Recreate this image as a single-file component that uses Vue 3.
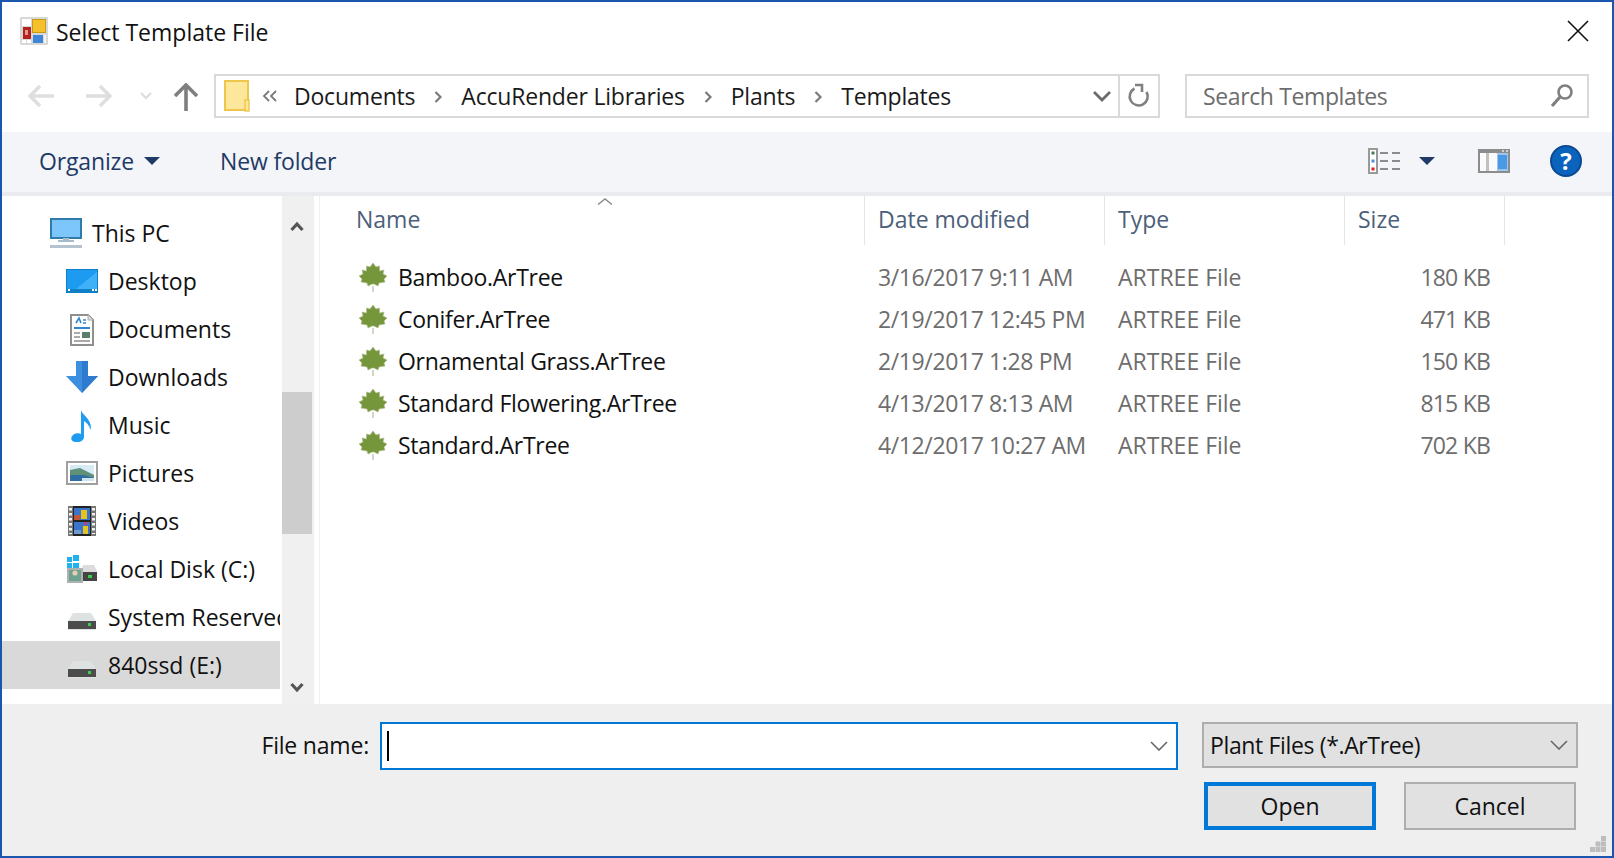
<script setup>
const crumbs = ['Documents', 'AccuRender Libraries', 'Plants', 'Templates']
const navItems = [
  { label: 'This PC', icon: 'pc', root: true },
  { label: 'Desktop', icon: 'desktop' },
  { label: 'Documents', icon: 'documents' },
  { label: 'Downloads', icon: 'downloads' },
  { label: 'Music', icon: 'music' },
  { label: 'Pictures', icon: 'pictures' },
  { label: 'Videos', icon: 'videos' },
  { label: 'Local Disk (C:)', icon: 'local' },
  { label: 'System Reserved', icon: 'drive' },
  { label: '840ssd (E:)', icon: 'drive', selected: true }
]
const files = [
  { name: 'Bamboo.ArTree', date: '3/16/2017 9:11 AM', size: '180 KB' },
  { name: 'Conifer.ArTree', date: '2/19/2017 12:45 PM', size: '471 KB' },
  { name: 'Ornamental Grass.ArTree', date: '2/19/2017 1:28 PM', size: '150 KB' },
  { name: 'Standard Flowering.ArTree', date: '4/13/2017 8:13 AM', size: '815 KB' },
  { name: 'Standard.ArTree', date: '4/12/2017 10:27 AM', size: '702 KB' }
]
</script>

<template>
  <div class="window">
    <header class="title">
      <svg class="app-icon" width="28" height="28" viewBox="0 0 28 28">
        <rect width="28" height="28" rx="1" fill="#d8d8d8" />
        <rect x="2" y="2" width="9" height="7" fill="#fff" />
        <rect x="12.500" y="2.500" width="13" height="13" fill="#f5c02c" stroke="#c99a18" />
        <rect x="3" y="10" width="8" height="12" fill="#b5211b" />
        <rect x="5" y="13" width="3" height="5" fill="#e09a92" />
        <rect x="13" y="18" width="10" height="8" fill="#3f86d8" />
        <rect x="2" y="23" width="4" height="3" fill="#fff" />
        <rect x="7" y="23" width="4" height="3" fill="#fff" />
        <rect x="24" y="18" width="2" height="8" fill="#f4f4f4" />
      </svg>
      <span class="title-text">Select Template File</span>
      <svg class="close" width="22" height="22" viewBox="0 0 22 22">
        <path d="M1 1 L21 21 M21 1 L1 21" stroke="#111" stroke-width="1.6" fill="none" />
      </svg>
    </header>

    <div class="nav">
      <div class="nav-buttons">
        <svg width="28" height="26" viewBox="0 0 28 26"><path d="M3 13 H27 M13 3 L3 13 L13 23" stroke="#dedede" stroke-width="3.4" fill="none" /></svg>
        <svg class="forward" width="28" height="26" viewBox="0 0 28 26"><path d="M1 13 H25 M15 3 L25 13 L15 23" stroke="#dedede" stroke-width="3.4" fill="none" /></svg>
        <svg class="recent" width="12" height="8" viewBox="0 0 12 8"><path d="M1 1 L6 6 L11 1" stroke="#dedede" stroke-width="2.4" fill="none" /></svg>
        <svg class="up" width="26" height="28" viewBox="0 0 26 28"><path d="M13 28 V3 M2 13 L13 2 L24 13" stroke="#7f7f7f" stroke-width="3.6" fill="none" /></svg>
      </div>
      <div class="address">
        <svg class="folder" width="26" height="32" viewBox="0 0 26 32">
          <rect x="1" y="1" width="23" height="29" fill="#fde79a" stroke="#eec64c" stroke-width="2" />
          <rect x="21" y="20" width="4" height="11" fill="#fde79a" stroke="#eec64c" stroke-width="1.4" />
        </svg>
        <svg class="more" width="16" height="12" viewBox="0 0 16 12"><path d="M7 1 L2 6 L7 11 M14 1 L9 6 L14 11" stroke="#7a7a7a" stroke-width="1.8" fill="none" /></svg>
        <template v-for="(crumb, i) in crumbs" :key="crumb">
          <span class="crumb">{{ crumb }}</span>
          <svg v-if="i < crumbs.length - 1" class="sep" width="8" height="12" viewBox="0 0 8 12"><path d="M1.5 1 L6.5 6 L1.5 11" stroke="#7a7a7a" stroke-width="2.2" fill="none" /></svg>
        </template>
        <svg class="drop" width="20" height="12" viewBox="0 0 20 12"><path d="M2 2 L10 10 L18 2" stroke="#6b6b6b" stroke-width="2.8" fill="none" /></svg>
        <div class="refresh">
          <svg width="24" height="26" viewBox="0 0 24 26"><path d="M19.500 9 A9 9 0 1 1 7.500 5.500 M8 2 H15 V9" stroke="#808080" stroke-width="2.6" fill="none" /></svg>
        </div>
      </div>
      <div class="search">
        <span class="search-text">Search Templates</span>
        <svg width="24" height="26" viewBox="0 0 24 26"><circle cx="15" cy="9" r="6.5" stroke="#7f7f7f" stroke-width="2.6" fill="none" /><path d="M10 14 L2 23" stroke="#7f7f7f" stroke-width="3.2" /></svg>
      </div>
    </div>

    <div class="toolbar">
      <span class="tool">Organize</span>
      <span class="caret"></span>
      <span class="tool new-folder">New folder</span>
      <div class="tool-right">
        <svg width="32" height="26" viewBox="0 0 32 26">
          <rect x="1" y="1" width="8" height="24" fill="#fff" stroke="#999" stroke-width="2" />
          <rect x="3.500" y="3.500" width="3" height="3" fill="#3f7f55" /><rect x="3.500" y="11.500" width="3" height="3" fill="#4a8fe8" /><rect x="3.500" y="19.500" width="3" height="3" fill="#e01f1f" />
          <path d="M12 5 H20 M24 5 H32 M12 13 H20 M24 13 H32 M12 21 H20 M24 21 H32" stroke="#8c8c8c" stroke-width="2" />
        </svg>
        <span class="caret view-caret"></span>
        <svg class="pane" width="32" height="24" viewBox="0 0 32 24">
          <rect width="32" height="24" fill="#8c8c8c" />
          <rect x="2" y="4" width="28" height="18" fill="#fafafa" />
          <rect x="8" y="4" width="3" height="18" fill="#c0c0c0" />
          <rect x="19" y="4" width="11" height="18" fill="#9cc6ec" />
          <rect x="20" y="6" width="9" height="14" fill="#4a99e4" />
          <rect x="24" y="1" width="2" height="2" fill="#cfcfcf" /><rect x="28" y="1" width="2" height="2" fill="#cfcfcf" />
        </svg>
        <div class="help">?</div>
      </div>
    </div>

    <main class="main">
      <aside class="sidebar">
        <div
          v-for="item in navItems"
          :key="item.label"
          class="nav-item"
          :class="{ root: item.root, selected: item.selected }"
        >
          <span class="nav-icon">
            <svg v-if="item.icon === 'pc'" width="32" height="30" viewBox="0 0 32 30">
              <rect x="1" y="1" width="30" height="19" fill="#7cc6fb" stroke="#2f7cab" stroke-width="2" />
              <rect x="13" y="20" width="6" height="3" fill="#a7bccb" /><rect x="8" y="22" width="16" height="2" fill="#a7bccb" /><rect y="27" width="32" height="3" fill="#b4c3cf" />
            </svg>
            <svg v-else-if="item.icon === 'desktop'" width="32" height="24" viewBox="0 0 32 24">
              <rect width="32" height="24" fill="#0f7fc8" /><rect x="1" y="1" width="30" height="19" fill="#1d9bf0" /><path d="M10 20 L31 3 V20 Z" fill="#3fb1f7" />
              <rect x="2" y="20" width="2" height="2" fill="#fff" /><rect x="26" y="20" width="2" height="2" fill="#fff" /><rect x="29" y="20" width="2" height="2" fill="#fff" />
            </svg>
            <svg v-else-if="item.icon === 'documents'" class="doc" width="24" height="32" viewBox="0 0 24 32">
              <path d="M1 1 H18 L23 6 V31 H1 Z" fill="#fff" stroke="#8f8f8f" stroke-width="2" />
              <path d="M18 1 V6 H23" fill="#ddd" stroke="#aaa" />
              <path d="M6 9 L9 4 L11 9 M13 6 H16 M13 9 H16" stroke="#2f86d0" stroke-width="1.6" fill="none" />
              <path d="M4 14 H20" stroke="#2f86d0" stroke-width="2" />
              <path d="M4 19 H10 M4 23 H10 M4 27 H20" stroke="#aaa" stroke-width="2" />
              <rect x="12" y="18" width="8" height="6" fill="#58806a" />
            </svg>
            <svg v-else-if="item.icon === 'downloads'" width="32" height="32" viewBox="0 0 32 32">
              <path d="M10 0 H22 V15 H32 L16 32 L0 15 H10 Z" fill="#3d8fe0" /><path d="M16 0 H22 V15 H32 L16 32 Z" fill="#2f7bd0" />
            </svg>
            <svg v-else-if="item.icon === 'music'" class="note" width="24" height="32" viewBox="0 0 24 32">
              <path d="M11 0 C12 5 22 9 21 20 C19 15 16 12 14 11 V27 C14 31 9 33 5 32 C1 31 0 28 3 25 C5 23 9 23 11 24 Z" fill="#1f9cf0" />
            </svg>
            <svg v-else-if="item.icon === 'pictures'" width="32" height="24" viewBox="0 0 32 24">
              <rect x="1" y="1" width="30" height="22" fill="#fff" stroke="#a0a0a0" stroke-width="2" />
              <rect x="4" y="4" width="24" height="16" fill="#d6ebf5" /><path d="M4 9 L14 7 L28 14 V17 H4 Z" fill="#5f9078" /><path d="M4 14 L18 14 L28 17 V20 H4 Z" fill="#2f6da5" /><path d="M16 17 H28 V20 H16 Z" fill="#cfe3ee" />
            </svg>
            <svg v-else-if="item.icon === 'videos'" class="film" width="28" height="30" viewBox="0 0 28 30">
              <rect width="28" height="30" fill="#777" />
              <path d="M2.500 2 V28 M25.500 2 V28" stroke="#f0f0f0" stroke-width="3" stroke-dasharray="2.500 2.500" />
              <rect x="5" y="0" width="18" height="30" fill="#222" />
              <rect x="6" y="2" width="16" height="12" fill="#3b74c8" /><rect x="6" y="16" width="16" height="12" fill="#3b74c8" />
              <rect x="6" y="9" width="6" height="5" fill="#c2573f" /><rect x="13" y="4" width="6" height="9" fill="#e6c21f" /><rect x="6" y="24" width="7" height="4" fill="#6a9ad0" /><rect x="15" y="20" width="5" height="8" fill="#e6c21f" /><rect x="16" y="16" width="3" height="3" fill="#c2407f" />
            </svg>
            <svg v-else-if="item.icon === 'local'" width="30" height="28" viewBox="0 0 30 28">
              <rect width="5" height="5" x="0" y="2" fill="#20b2ef" /><rect width="6" height="6" x="6" y="0" fill="#20b2ef" /><rect width="5" height="5" x="0" y="8" fill="#20b2ef" /><rect width="6" height="5" x="6" y="8" fill="#20b2ef" />
              <path d="M16 10 H27 L30 16 V26 H14 V16 Z" fill="#dcdcdc" /><rect x="14" y="17" width="16" height="9" fill="#444" /><rect x="21" y="20" width="4" height="3" fill="#37d04a" />
              <rect y="13" width="16" height="15" fill="#b0b0b0" /><rect x="2" y="15" width="12" height="11" fill="#6da28e" /><circle cx="8" cy="18" r="2.6" fill="#e9cdb3" />
            </svg>
            <svg v-else class="disk" width="28" height="17" viewBox="0 0 28 17">
              <path d="M5 0 H23 L28 8 V17 H0 V8 Z" fill="#dfe2e2" /><rect y="8" width="28" height="8" fill="#4c4c4c" /><rect x="20" y="10" width="3" height="3" fill="#37d04a" />
            </svg>
          </span>
          <span class="nav-label">{{ item.label }}</span>
        </div>
      </aside>

      <div class="scrollbar">
        <div class="scroll-top">
          <svg width="14" height="11" viewBox="0 0 14 11"><path d="M1.5 9 L7 3 L12.5 9" stroke="#555" stroke-width="3.2" fill="none" /></svg>
        </div>
        <div class="thumb"></div>
        <div class="scroll-bottom">
          <svg width="14" height="11" viewBox="0 0 14 11"><path d="M1.5 2 L7 8 L12.5 2" stroke="#555" stroke-width="3.2" fill="none" /></svg>
        </div>
      </div>

      <section class="content">
        <div class="head">
          <div class="col col-name head-cell name-head">
            Name
            <svg class="sort" width="16" height="7" viewBox="0 0 16 7"><path d="M1 6.5 L8 1 L15 6.5" stroke="#8a8a8a" stroke-width="1.4" fill="none" /></svg>
          </div>
          <div class="col col-date head-cell">Date modified</div>
          <div class="col col-type head-cell">Type</div>
          <div class="col col-size head-cell">Size</div>
        </div>
        <div class="rows">
          <div v-for="file in files" :key="file.name" class="row">
            <div class="col col-name file-name">
              <svg width="30" height="30" viewBox="0 0 30 30">
                <path d="M15 24 V30" stroke="#c8cdbd" stroke-width="1.6" />
                <path d="M15 1 L18 5 L21.500 4 L21.500 9 L26 8 L25 12 L29 14 L26 17 L27 20 L21 21 L20 24 L16 22 H14 L10 24 L9 21 L3 20 L4 17 L1 14 L5 12 L4 8 L8.500 9 L8.500 4 L12 5 Z" fill="#76963c" stroke="#aebf8c" stroke-width="0.7" />
              </svg>
              <span class="file-text">{{ file.name }}</span>
            </div>
            <div class="col col-date muted date-cell">{{ file.date }}</div>
            <div class="col col-type muted">ARTREE File</div>
            <div class="col col-size muted size-cell">{{ file.size }}</div>
          </div>
        </div>
      </section>
    </main>

    <footer class="footer">
      <div class="footer-row">
        <label class="file-label">File name:</label>
        <div class="file-input">
          <span class="cursor"></span>
          <svg width="18" height="10" viewBox="0 0 18 10"><path d="M1 1 L9 9 L17 1" stroke="#666" stroke-width="1.6" fill="none" /></svg>
        </div>
        <div class="filter">
          <span class="filter-text">Plant Files (*.ArTree)</span>
          <svg width="18" height="10" viewBox="0 0 18 10"><path d="M1 1 L9 9 L17 1" stroke="#666" stroke-width="1.6" fill="none" /></svg>
        </div>
      </div>
      <div class="footer-buttons">
        <button class="btn primary">Open</button>
        <button class="btn">Cancel</button>
      </div>
      <svg class="grip" width="16" height="16" viewBox="0 0 16 16">
        <path d="M11 0 h5 v5 h-5 z M5.500 5.500 h5 v5 h-5 z M11 5.500 h5 v5 h-5 z M0 11 h5 v5 h-5 z M5.500 11 h5 v5 h-5 z M11 11 h5 v5 h-5 z" fill="#bdbdbd" />
      </svg>
    </footer>
  </div>
</template>

<style scoped>
.window {
  width: 1614px;
  height: 858px;
  box-sizing: border-box;
  border: 2px solid #1a56ad;
  background: #fff;
  display: flex;
  flex-direction: column;
  overflow: hidden;
  font-family: "Open Sans", "Noto Sans", sans-serif;
  font-size: 23px;
  color: #111;
}
.title {
  height: 58px;
  flex: none;
  display: flex;
  align-items: center;
  padding: 0 17px 0 18px;
}
.app-icon { flex: none; }
.title-text { margin-left: 8px; font-size: 23px; color: #111; margin-top: 1px; }
.close { margin-left: auto; margin-right: 6px; margin-top: 0; }

.nav {
  height: 72px;
  flex: none;
  display: flex;
  align-items: flex-start;
  padding-top: 14px;
  box-sizing: border-box;
}
.nav-buttons {
  width: 212px;
  height: 44px;
  flex: none;
  display: flex;
  align-items: center;
  padding-left: 25px;
  box-sizing: border-box;
}
.forward { margin-left: 30px; }
.recent { margin-left: 27px; }
.up { margin-left: 21px; margin-top: 2px; }
.address {
  width: 946px;
  height: 44px;
  box-sizing: border-box;
  flex: none;
  border: 2px solid #d9d9d9;
  display: flex;
  align-items: center;
  padding-left: 8px;
}
.folder { flex: none; }
.more { margin-left: 12px; margin-right: 16px; }
.crumb { font-size: 23px; color: #1a1a1a; letter-spacing: -0.2px; }
.sep { margin: 2px 19px 0; flex: none; }
.drop { margin-left: auto; margin-right: 6px; }
.refresh {
  width: 40px;
  height: 100%;
  flex: none;
  border-left: 2px solid #d9d9d9;
  box-sizing: border-box;
  display: flex;
  align-items: center;
  justify-content: center;
}
.search {
  width: 404px;
  height: 44px;
  margin-left: 25px;
  flex: none;
  box-sizing: border-box;
  border: 2px solid #d9d9d9;
  display: flex;
  align-items: center;
  justify-content: space-between;
  padding: 0 13px 0 16px;
}
.search-text { color: #6d6d6d; font-size: 23px; letter-spacing: -0.38px; }

.toolbar {
  height: 64px;
  flex: none;
  box-sizing: border-box;
  background: #f3f5f8;
  border-bottom: 4px solid #e9ebee;
  display: flex;
  align-items: center;
  padding: 0 0 2px 37px;
}
.tool { color: #1f3a66; font-size: 23px; letter-spacing: -0.15px; }
.caret {
  width: 0;
  height: 0;
  border-left: 8px solid transparent;
  border-right: 8px solid transparent;
  border-top: 8px solid #1f3a66;
  margin-left: 10px;
}
.new-folder { margin-left: 60px; }
.tool-right {
  margin-left: auto;
  display: flex;
  align-items: center;
  padding-right: 30px;
}
.view-caret { margin-left: 19px; }
.pane { margin-left: 43px; }
.help {
  width: 32px;
  height: 32px;
  margin-left: 40px;
  border-radius: 50%;
  box-sizing: border-box;
  border: 2px solid #0b4a8f;
  background: #0a63bd;
  color: #fff;
  font-weight: 700;
  font-size: 24px;
  line-height: 27px;
  text-align: center;
}

.main { flex: 1; min-height: 0; display: flex; }
.sidebar {
  width: 278px;
  flex: none;
  padding-top: 13px;
  box-sizing: border-box;
  overflow: hidden;
}
.nav-item {
  height: 48px;
  display: flex;
  align-items: center;
  padding-left: 64px;
  white-space: nowrap;
}
.nav-item.root { padding-left: 48px; }
.nav-item.selected { background: #d9d9d9; }
.nav-icon {
  width: 32px;
  height: 34px;
  flex: none;
  display: flex;
  align-items: center;
  justify-content: center;
}
.doc { margin-top: 2px; }
.note { margin-top: 2px; }
.disk { margin-top: 8px; }
.nav-label { margin-left: 10px; color: #111; }

.scrollbar {
  width: 32px;
  margin-left: 2px;
  flex: none;
  background: #f0f0f0;
  display: flex;
  flex-direction: column;
}
.scroll-top {
  height: 196px;
  flex: none;
  box-sizing: border-box;
  padding: 11px 0 0 8px;
}
.thumb { width: 30px; height: 142px; flex: none; background: #cdcdcd; }
.scroll-bottom {
  flex: 1;
  display: flex;
  align-items: flex-end;
  padding: 0 0 11px 8px;
}

.content {
  flex: 1;
  min-width: 0;
  margin-left: 5px;
  border-left: 1px solid #f0f0f0;
}
.head { height: 49px; display: flex; }
.col { box-sizing: border-box; flex: none; white-space: nowrap; }
.col-name { width: 545px; }
.col-date { width: 240px; }
.col-type { width: 240px; }
.col-size { width: 160px; }
.head-cell {
  padding-left: 13px;
  color: #4c607a;
  font-size: 23px;
  line-height: 46px;
  border-right: 1px solid #e5e5e5;
}
.name-head { padding-left: 36px; position: relative; }
.sort { position: absolute; left: 277px; top: 2px; }
.rows { margin-top: 11px; }
.row { height: 42px; display: flex; align-items: center; }
.file-name { padding-left: 38px; display: flex; align-items: center; gap: 10px; color: #111; }
.file-text { letter-spacing: -0.28px; }
.muted { padding-left: 13px; color: #6d6d6d; }
.date-cell { letter-spacing: -0.38px; }
.size-cell { text-align: right; padding-right: 15px; padding-left: 0; letter-spacing: -0.8px; }

.footer {
  height: 152px;
  flex: none;
  background: #efefef;
  position: relative;
  box-sizing: border-box;
  padding-top: 18px;
}
.footer-row { display: flex; align-items: flex-start; }
.file-label { width: 368px; box-sizing: border-box; text-align: right; padding-right: 1px; line-height: 46px; letter-spacing: -0.2px; }
.file-input {
  width: 798px;
  height: 48px;
  margin-left: 10px;
  box-sizing: border-box;
  background: #fff;
  border: 2px solid #0078d7;
  display: flex;
  align-items: center;
  justify-content: space-between;
  padding: 0 8px 0 5px;
}
.cursor { width: 2px; height: 30px; background: #000; }
.filter {
  width: 376px;
  height: 46px;
  margin-left: 24px;
  box-sizing: border-box;
  background: #e1e1e1;
  border: 2px solid #adadad;
  display: flex;
  align-items: center;
  justify-content: space-between;
  padding: 0 8px 0 6px;
}
.filter-text { letter-spacing: -0.36px; }
.footer-buttons {
  display: flex;
  margin-top: 12px;
  padding-left: 1202px;
  gap: 28px;
}
.btn {
  width: 172px;
  height: 48px;
  box-sizing: border-box;
  background: #e1e1e1;
  border: 2px solid #adadad;
  font: inherit;
  color: #111;
  padding: 0 0 1px;
}
.btn.primary { border: 4px solid #0078d7; }
.grip { position: absolute; right: 6px; bottom: 4px; }
</style>
